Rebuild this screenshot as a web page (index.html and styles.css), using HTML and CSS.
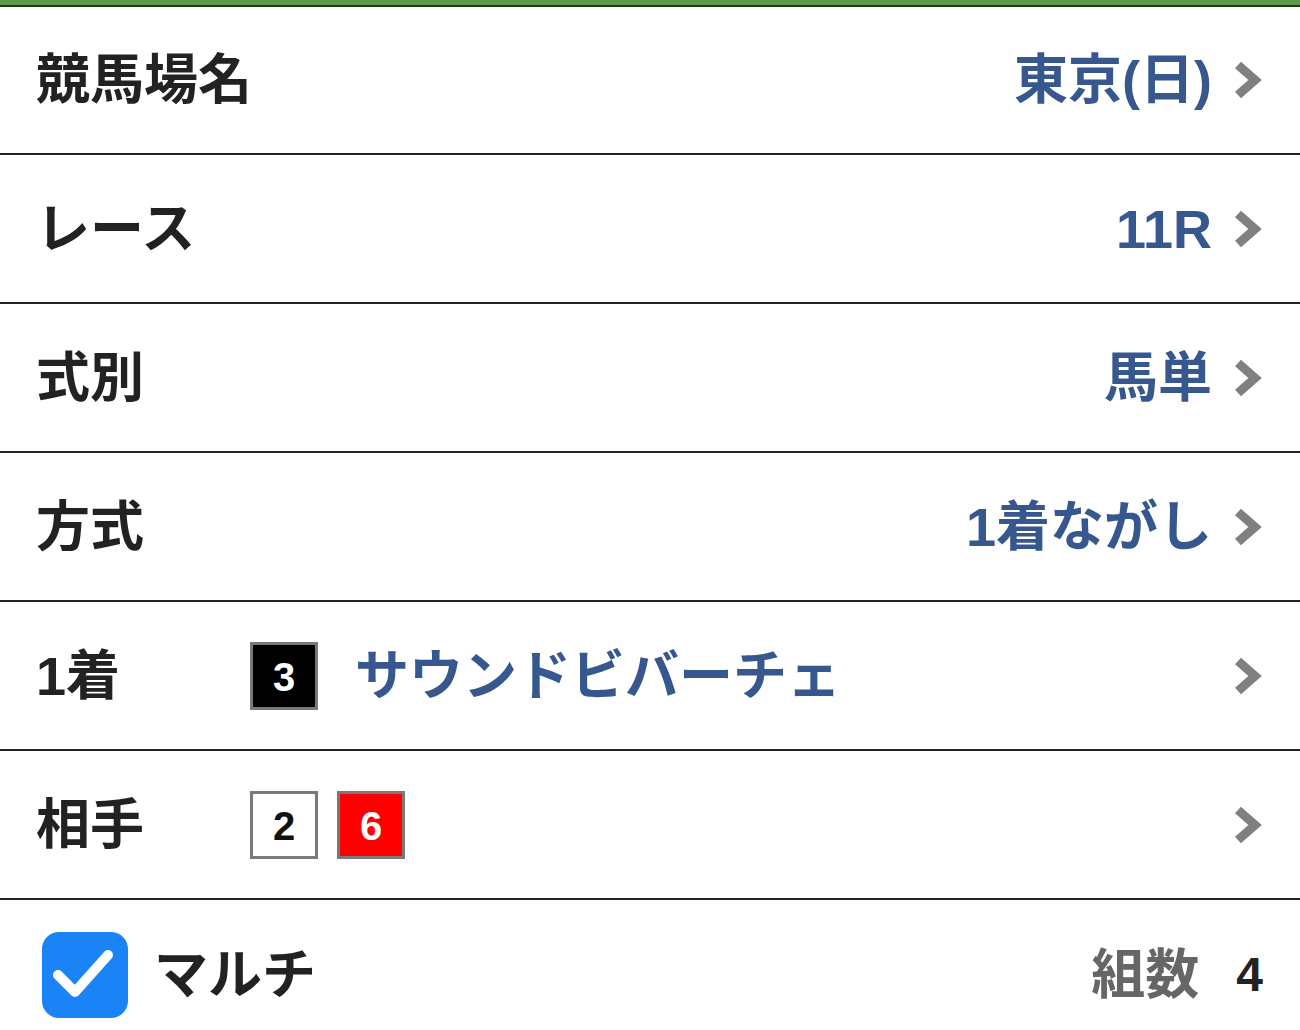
FILE: index.html
```html
<!DOCTYPE html>
<html lang="ja">
<head>
<meta charset="utf-8">
<link rel="stylesheet" href="styles.css">
</head>
<body>
<div class="topbar"></div>
<ul class="list">
  <li class="row">
    <span class="label">競馬場名</span>
    <span class="value">東京(日)</span>
    <svg class="chev" viewBox="0 0 31 40"><polyline points="6,5 23,20 6,35"/></svg>
  </li>
  <li class="row">
    <span class="label">レース</span>
    <span class="value">11R</span>
    <svg class="chev" viewBox="0 0 31 40"><polyline points="6,5 23,20 6,35"/></svg>
  </li>
  <li class="row">
    <span class="label">式別</span>
    <span class="value">馬単</span>
    <svg class="chev" viewBox="0 0 31 40"><polyline points="6,5 23,20 6,35"/></svg>
  </li>
  <li class="row">
    <span class="label">方式</span>
    <span class="value">1着ながし</span>
    <svg class="chev" viewBox="0 0 31 40"><polyline points="6,5 23,20 6,35"/></svg>
  </li>
  <li class="row">
    <span class="label label-fixed">1着</span>
    <span class="boxes">
      <span class="num num-black">3</span>
      <span class="horse">サウンドビバーチェ</span>
    </span>
    <svg class="chev" viewBox="0 0 31 40"><polyline points="6,5 23,20 6,35"/></svg>
  </li>
  <li class="row">
    <span class="label label-fixed">相手</span>
    <span class="boxes boxes-tight">
      <span class="num num-white">2</span>
      <span class="num num-red">6</span>
    </span>
    <svg class="chev" viewBox="0 0 31 40"><polyline points="6,5 23,20 6,35"/></svg>
  </li>
  <li class="row row-last">
    <span class="check">
      <svg viewBox="0 0 86 86"><polyline points="16,43 33,60 66,23"/></svg>
    </span>
    <span class="label multi">マルチ</span>
    <span class="count-label">組数</span>
    <span class="count">4</span>
  </li>
</ul>
</body>
</html>
```

FILE: styles.css
```css
* { box-sizing: border-box; }
html, body {
  margin: 0;
  padding: 0;
  background: #fff;
}
body {
  font-family: "Liberation Sans", "Noto Sans CJK JP", sans-serif;
  font-weight: 700;
  color: #222;
  overflow: hidden;
}
.topbar {
  height: 7px;
  background: #5b9a4b;
  border-bottom: 2px solid #263522;
}
.list {
  list-style: none;
  margin: 0;
  padding: 0;
}
.row {
  height: 149px;
  display: flex;
  align-items: center;
  padding: 0 37px 0 36px;
  border-bottom: 2px solid #222;
}
.row:first-child {
  height: 148px;
}
.row-last {
  border-bottom: none;
  padding-left: 42px;
}
.label {
  font-size: 54px;
  line-height: 1;
  color: #222;
  flex: 1;
}
.label-fixed {
  flex: 0 0 214px;
}
.value {
  font-size: 54px;
  line-height: 1;
  color: #37578f;
}
.chev {
  width: 31px;
  height: 40px;
  margin-left: 20px;
  flex: none;
}
.chev polyline {
  fill: none;
  stroke: #808080;
  stroke-width: 9;
  stroke-linejoin: miter;
}
.boxes {
  flex: 1;
  display: flex;
  align-items: center;
  gap: 37px;
}
.boxes-tight {
  gap: 19px;
}
.num {
  width: 68px;
  height: 68px;
  border: 3px solid #7a7a7a;
  display: flex;
  align-items: center;
  justify-content: center;
  font-family: "Liberation Sans", sans-serif;
  font-size: 40px;
  font-weight: 700;
  padding-top: 3px;
}
.num-black { background: #000; color: #fff; }
.num-white { background: #fff; color: #111; }
.num-red { background: #ff0000; color: #fff; }
.horse {
  font-size: 54px;
  line-height: 1;
  color: #37578f;
}
.check {
  width: 86px;
  height: 86px;
  border-radius: 17px;
  background: #1a83f6;
  flex: none;
  margin-right: 26px;
}
.check svg {
  width: 86px;
  height: 86px;
  display: block;
}
.check polyline {
  fill: none;
  stroke: #fff;
  stroke-width: 10;
  stroke-linecap: round;
  stroke-linejoin: round;
}
.multi {
  flex: 1;
}
.count-label {
  font-size: 54px;
  line-height: 1;
  color: #666;
  margin-right: 37px;
}
.count {
  font-size: 48px;
  line-height: 1;
  color: #222;
}
```
